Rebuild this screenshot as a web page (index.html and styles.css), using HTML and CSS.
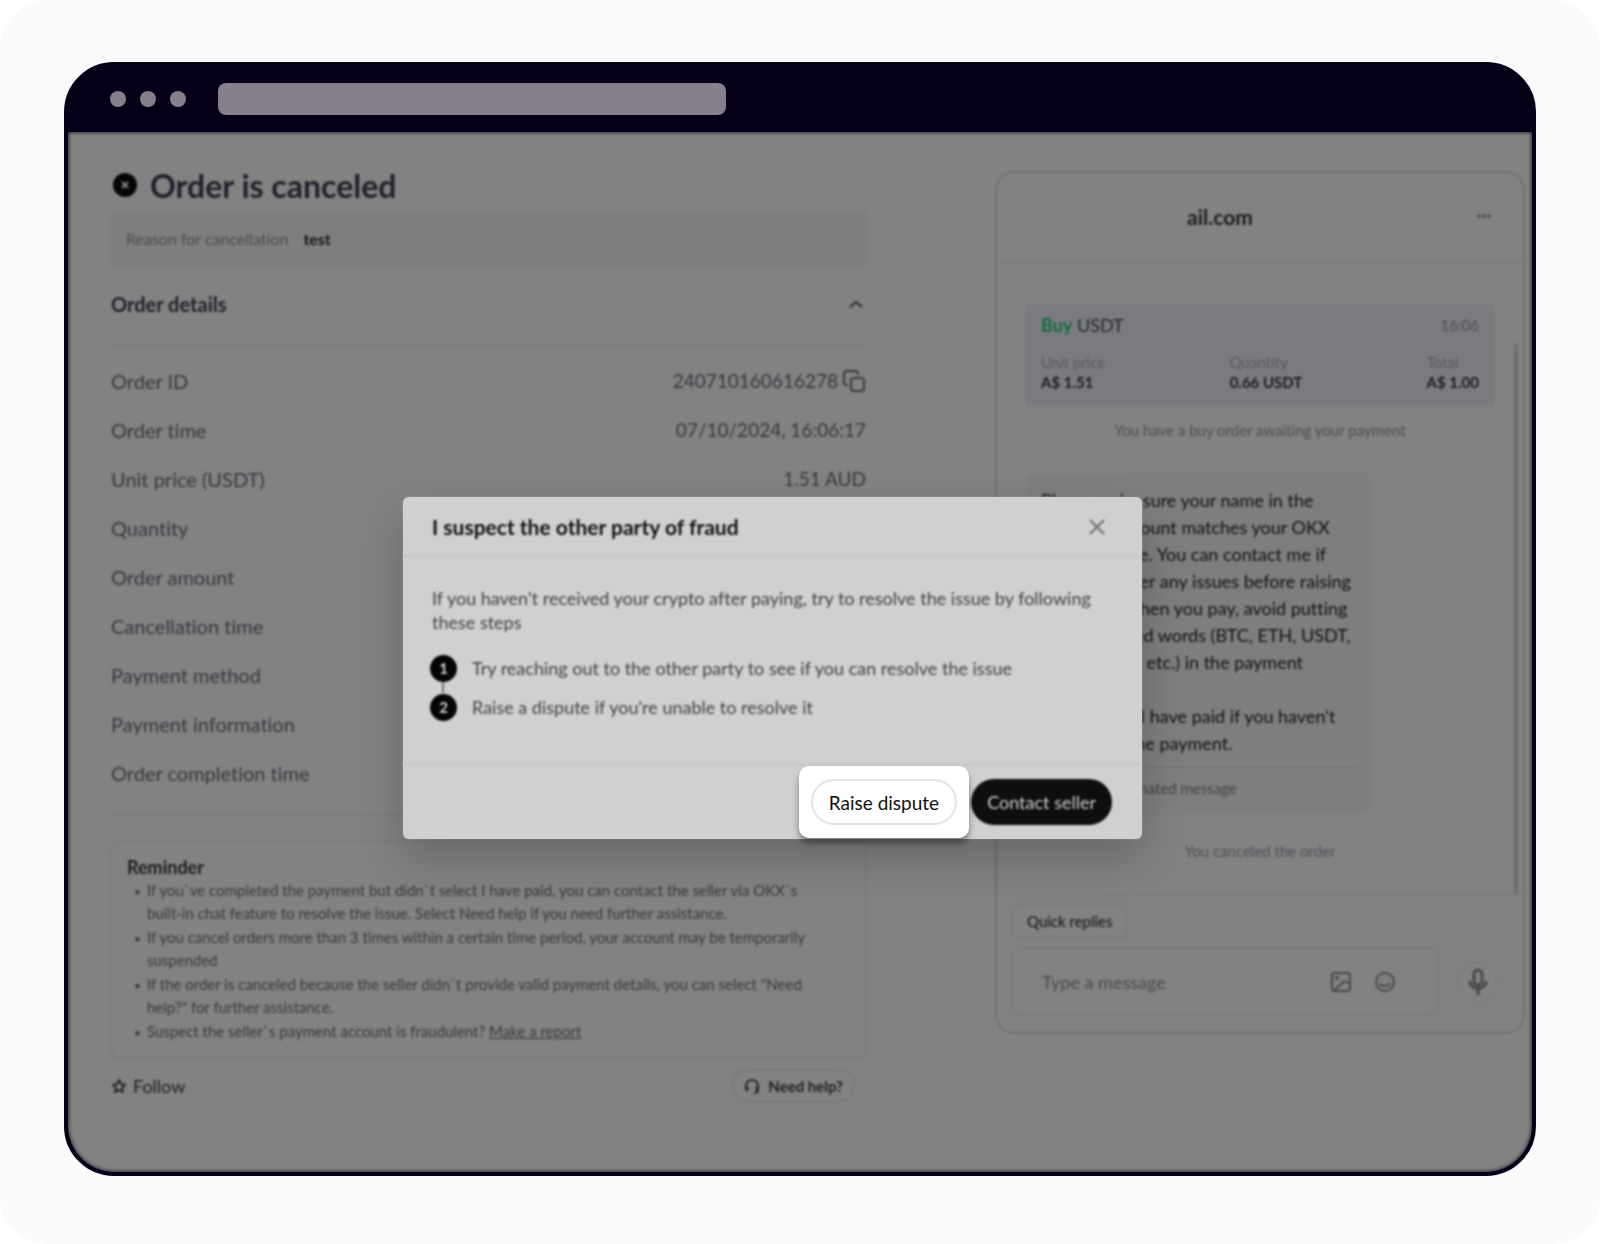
FILE: index.html
```html
<!DOCTYPE html>
<html lang="en">
<head>
    <meta charset="UTF-8">
    <meta name="viewport" content="width=device-width, initial-scale=1.0">
    <title>Order is canceled</title>
    <link rel="stylesheet" href="styles.css">
</head>
<body>
    <div class="canvas">
        <div class="window">
            <div class="titlebar">
                <span class="dot"></span>
                <span class="dot"></span>
                <span class="dot"></span>
                <span class="address"></span>
            </div>

            <div class="screen">
                <div class="page">
                    <main class="order">
                        <h1>
                            <svg class="cancel-icon" viewBox="0 0 24 24" width="24" height="24">
                                <circle cx="12" cy="12" r="12" fill="#060606"/>
                                <path d="M9 9l6 6M15 9l-6 6" stroke="#8a8a8a" stroke-width="2"/>
                            </svg>
                            Order is canceled
                        </h1>
                        <p class="reason"><span>Reason for cancellation</span><b>test</b></p>

                        <div class="details-head">
                            <h2>Order details</h2>
                            <button type="button" class="icon-btn" aria-label="Collapse">
                                <svg viewBox="0 0 16 16" width="16" height="16" fill="none" stroke="#2c2c2e" stroke-width="2">
                                    <path d="M2 11l6-5 6 5"/>
                                </svg>
                            </button>
                        </div>

                        <dl class="details">
                            <div>
                                <dt>Order ID</dt>
                                <dd>240710160616278<button type="button" class="icon-btn" aria-label="Copy">
                                    <svg viewBox="0 0 24 24" width="24" height="24" fill="none" stroke="#3a3b3f" stroke-width="2">
                                        <path d="M6 16H5a3 3 0 0 1-3-3V5a3 3 0 0 1 3-3h8a3 3 0 0 1 3 3v1"/>
                                        <rect x="9" y="9" width="13" height="13" rx="3"/>
                                    </svg>
                                </button></dd>
                            </div>
                            <div><dt>Order time</dt><dd>07/10/2024, 16:06:17</dd></div>
                            <div><dt>Unit price (USDT)</dt><dd>1.51 AUD</dd></div>
                            <div><dt>Quantity</dt></div>
                            <div><dt>Order amount</dt></div>
                            <div><dt>Cancellation time</dt></div>
                            <div><dt>Payment method</dt></div>
                            <div><dt>Payment information</dt></div>
                            <div><dt>Order completion time</dt></div>
                        </dl>

                        <section class="reminder">
                            <h3>Reminder</h3>
                            <ul>
                                <li>If you`ve completed the payment but didn`t select I have paid, you can contact the seller via OKX`s<br>built-in chat feature to resolve the issue. Select Need help if you need further assistance.</li>
                                <li>If you cancel orders more than 3 times within a certain time period, your account may be temporarily<br>suspended</li>
                                <li>If the order is canceled because the seller didn`t provide valid payment details, you can select "Need<br>help?" for further assistance.</li>
                                <li>Suspect the seller`s payment account is fraudulent? <a href="#">Make a report</a></li>
                            </ul>
                        </section>

                        <div class="order-foot">
                            <button type="button" class="follow">
                                <svg viewBox="0 0 16 16" width="16" height="16" fill="none" stroke="#2a2a2a" stroke-width="2" stroke-linejoin="round">
                                    <path d="M8 2l2 4 4 1-3 3 1 4-4-2-4 2 1-4-3-3 4-1z"/>
                                </svg>
                                Follow
                            </button>
                            <button type="button" class="help">
                                <svg viewBox="0 0 16 16" width="16" height="16" fill="none" stroke="#2a2a2a" stroke-width="2">
                                    <path d="M2 12V8a6 6 0 0 1 12 0v4c0 2-1 3-4 3"/>
                                    <path d="M3 9v4M13 9v4" stroke-width="3"/>
                                </svg>
                                Need help?
                            </button>
                        </div>
                    </main>

                    <aside class="chat">
                        <header class="chat-head">
                            <span class="peer">ail.com</span>
                            <button type="button" class="icon-btn" aria-label="More">
                                <svg viewBox="0 0 16 16" width="16" height="16" fill="#333">
                                    <circle cx="3" cy="8" r="1.500"/><circle cx="8" cy="8" r="1.500"/><circle cx="13" cy="8" r="1.500"/>
                                </svg>
                            </button>
                        </header>

                        <div class="messages">
                            <div class="ticket">
                                <div class="ticket-head">
                                    <span><b class="buy">Buy</b> USDT</span>
                                    <time>16:06</time>
                                </div>
                                <div class="ticket-body">
                                    <p><span>Unit price</span><b>A$ 1.51</b></p>
                                    <p><span>Quantity</span><b>0.66 USDT</b></p>
                                    <p><span>Total</span><b>A$ 1.00</b></p>
                                </div>
                            </div>
                            <p class="notice">You have a buy order awaiting your payment</p>
                            <div class="bubble">
                                <p>Please make sure your name in the<br>payment account matches your OKX<br>verified name. You can contact me if<br>you encounter any issues before raising<br>a dispute. When you pay, avoid putting<br>crypto-related words (BTC, ETH, USDT,<br>Bitcoin, coin, etc.) in the payment<br>reference.<br>Don't select I have paid if you haven't<br>completed the payment.</p>
                                <small>This is an automated message</small>
                            </div>
                            <p class="notice">You canceled the order</p>
                            <span class="scrollbar"></span>
                        </div>

                        <div class="composer">
                            <button type="button" class="quick">Quick replies</button>
                            <div class="compose-row">
                                <div class="field">
                                    <input type="text" placeholder="Type a message" aria-label="Type a message">
                                    <button type="button" class="icon-btn" aria-label="Send picture">
                                        <svg viewBox="0 0 24 24" width="24" height="24" fill="none" stroke="#484848" stroke-width="2">
                                            <rect x="3" y="3" width="18" height="18" rx="3"/>
                                            <circle cx="8" cy="8" r="1"/>
                                            <path d="M5 21l9-9c2-1 5 0 7 2"/>
                                        </svg>
                                    </button>
                                    <button type="button" class="icon-btn" aria-label="Emoji">
                                        <svg viewBox="0 0 24 24" width="24" height="24" fill="none" stroke="#484848" stroke-width="2">
                                            <circle cx="12" cy="12" r="9"/>
                                            <path d="M7 13c1 4 9 4 10 0"/>
                                            <path d="M9 8v2M15 8v2" stroke-width="1"/>
                                        </svg>
                                    </button>
                                </div>
                                <button type="button" class="mic" aria-label="Record">
                                    <svg viewBox="0 0 24 28" width="24" height="28" fill="none" stroke="#484848" stroke-width="3">
                                        <rect x="8" y="2" width="8" height="15" rx="4"/>
                                        <path d="M4 13c0 10 16 10 16 0M12 21v6"/>
                                    </svg>
                                </button>
                            </div>
                        </div>
                    </aside>
                </div>

                <div class="modal" role="dialog" aria-labelledby="modal-title">
                    <header class="modal-head">
                        <h2 id="modal-title">I suspect the other party of fraud</h2>
                        <button type="button" class="icon-btn" aria-label="Close">
                            <svg viewBox="0 0 16 16" width="16" height="16" stroke="#6e6e6e" stroke-width="2">
                                <path d="M1 1l14 14M15 1L1 15"/>
                            </svg>
                        </button>
                    </header>
                    <div class="modal-body">
                        <p>If you haven't received your crypto after paying, try to resolve the issue by following<br>these steps</p>
                        <ol>
                            <li><span class="num">1</span>Try reaching out to the other party to see if you can resolve the issue</li>
                            <li><span class="num">2</span>Raise a dispute if you're unable to resolve it</li>
                        </ol>
                    </div>
                    <footer class="modal-foot">
                        <div class="spotlight">
                            <button type="button" class="btn">Raise dispute</button>
                        </div>
                        <button type="button" class="btn btn-dark">Contact seller</button>
                    </footer>
                </div>
            </div>
        </div>
    </div>
</body>
</html>
```
FILE: styles.css
```css
* {
    box-sizing: border-box;
    margin: 0;
    padding: 0;
}

body {
    font-family: Lato, "Liberation Sans", sans-serif;
    font-variant-ligatures: none;
    background: #fff;
    color: #1c1c1e;
}

button {
    font: inherit;
    color: inherit;
    background: none;
    border: none;
    cursor: pointer;
}

svg {
    display: block;
}

.canvas {
    min-height: 100vh;
    padding: 62px 64px 68px;
    background: #fafafa;
    border-radius: 48px;
    display: flex;
}

.window {
    flex: 1;
    display: flex;
    flex-direction: column;
    border: 4px solid #050017;
    border-radius: 50px;
    background: #050017;
    overflow: hidden;
}

.titlebar {
    display: flex;
    align-items: center;
    gap: 14px;
    height: 66px;
    padding: 0 42px;
}

.dot {
    width: 16px;
    height: 16px;
    border-radius: 50%;
    background: #85808b;
}

.address {
    width: 508px;
    height: 32px;
    margin-left: 18px;
    border-radius: 8px;
    background: #85808b;
}

.screen {
    position: relative;
    flex: 1;
    background: #828282;
    border-radius: 0 0 46px 46px;
    box-shadow: inset 0 0 4px #050017;
}

/* everything behind the highlighted button is out of focus */
.page,
.modal-head,
.modal-body,
.btn-dark {
    filter: blur(1px);
}

.page {
    display: grid;
    grid-template-columns: 1fr 530px;
    gap: 129px;
    align-items: start;
    padding: 39px 7px 60px 43px;
}

h1 {
    display: flex;
    align-items: center;
    gap: 13px;
    height: 28px;
    font-size: 32px;
    color: #20222b;
}

.cancel-icon {
    margin-left: 2px;
}

.reason {
    display: flex;
    align-items: center;
    gap: 15px;
    height: 54px;
    margin-top: 13px;
    padding: 0 15px 1px;
    background: #7e7e7e;
    font-size: 16px;
    color: #4c4c4c;
}

.reason b {
    color: #141416;
}

.details-head {
    display: flex;
    align-items: center;
    justify-content: space-between;
    height: 80px;
    padding: 0 2px 3px 0;
    border-bottom: 1px solid #7a7a7a;
}

.details-head h2 {
    font-size: 20px;
    color: #20222b;
}

.details {
    padding: 10px 0 17px;
    border-bottom: 1px solid #7a7a7a;
    font-size: 20px;
    color: #36383f;
}

.details div {
    display: flex;
    align-items: center;
    justify-content: space-between;
    height: 49px;
}

.details dd {
    display: flex;
    align-items: center;
    gap: 4px;
    font-size: 19px;
}

.reminder {
    margin-top: 25px;
    padding: 15px 15px 14px;
    border: 1px solid #7a7a7a;
    border-radius: 8px;
    font-size: 15px;
    line-height: 23px;
    color: #393939;
}

.reminder h3 {
    font-size: 18px;
    color: #1c1c1e;
}

.reminder ul {
    padding-left: 20px;
}

.reminder li {
    margin-bottom: 1px;
    white-space: nowrap;
}

.reminder li::marker {
    content: "•\00a0\00a0";
    font-size: 12px;
}

.reminder a {
    color: inherit;
}

.order-foot {
    display: flex;
    align-items: center;
    justify-content: space-between;
    padding: 10px 11px 0 0;
}

.follow,
.help {
    display: flex;
    align-items: center;
    gap: 6px;
    font-size: 18px;
    color: #1e1e1e;
}

.help {
    height: 33px;
    padding: 0 11px;
    gap: 8px;
    border: 1px solid #747474;
    border-radius: 17px;
    font-size: 15px;
    font-weight: 700;
}

.chat {
    display: flex;
    flex-direction: column;
    border: 2px solid #727272;
    border-radius: 20px;
}

.chat-head {
    display: flex;
    align-items: center;
    justify-content: space-between;
    height: 90px;
    padding: 0 31px 3px 190px;
    border-bottom: 1px solid #7a7a7a;
}

.peer {
    font-size: 21px;
    font-weight: 700;
}

.messages {
    position: relative;
    height: 632px;
    padding: 41px 29px 0;
    border-bottom: 1px solid #7a7a7a;
}

.scrollbar {
    position: absolute;
    right: 5px;
    bottom: 0;
    width: 4px;
    height: 550px;
    background: #6e6e6e;
}

.ticket {
    height: 102px;
    padding: 0 15px;
    background: #797b81;
}

.ticket-head {
    display: flex;
    align-items: center;
    justify-content: space-between;
    height: 41px;
    font-size: 18px;
    color: #26272d;
}

.ticket-head time {
    font-size: 15px;
    color: #505157;
}

.buy {
    color: #176b3a;
}

.ticket-body {
    display: flex;
    justify-content: space-between;
    padding-top: 7px;
    font-size: 15px;
    line-height: 20px;
}

.ticket-body span {
    display: block;
    color: #5a5b61;
}

.notice {
    padding: 14px 0;
    font-size: 15px;
    line-height: 20px;
    text-align: center;
    color: #4e5057;
}

.bubble {
    width: 344px;
    margin: 19px 0 13px;
    padding: 14px 13px 0 15px;
    border-radius: 8px;
    background: #7e7e7e;
    font-size: 18px;
    line-height: 27px;
    color: #111;
    white-space: nowrap;
}

.bubble small {
    display: block;
    margin-top: 10px;
    padding: 10px 0 16px;
    border-top: 1px solid #707070;
    font-size: 15px;
    line-height: 20px;
    color: #444;
}

.composer {
    padding: 9px 15px 16px;
}

.quick {
    height: 34px;
    padding: 0 14px;
    border: 1px solid #7a7a7a;
    border-radius: 6px;
    font-size: 15px;
    color: #111;
}

.compose-row {
    display: flex;
    align-items: center;
    gap: 19px;
    margin-top: 10px;
}

.field {
    display: flex;
    align-items: center;
    gap: 20px;
    flex: 1;
    height: 68px;
    padding: 0 40px 0 29px;
    border: 1px solid #7a7a7a;
    border-radius: 8px;
}

.field input {
    flex: 1;
    min-width: 0;
    border: none;
    outline: none;
    background: none;
    font: inherit;
    font-size: 18px;
}

.field input::placeholder {
    color: #4c4c4c;
    opacity: 1;
}

.mic {
    display: flex;
    align-items: center;
    justify-content: center;
    width: 42px;
    height: 42px;
    margin-right: 9px;
    border: 1px solid #7d7d7d;
    border-radius: 50%;
}

.modal {
    position: absolute;
    top: 365px;
    left: 335px;
    width: 739px;
    border-radius: 6px;
    background: #d0d0d0;
    box-shadow: 0 20px 44px rgba(0, 0, 0, 0.2), 0 0 2px #b0b0b0;
}

.modal-head {
    display: flex;
    align-items: center;
    justify-content: space-between;
    height: 60px;
    padding: 0 37px 0 29px;
    border-bottom: 1px solid #bebebe;
}

.modal-head h2 {
    font-size: 21px;
    color: #111;
}

.modal-body {
    padding: 29px 29px 43px;
    border-bottom: 1px solid #bebebe;
    font-size: 18px;
    line-height: 24px;
    color: #424242;
}

.modal-body p {
    white-space: nowrap;
}

.modal-body ol {
    margin: 20px 0 0 -2px;
    list-style: none;
}

.modal-body li {
    position: relative;
    display: flex;
    align-items: center;
    gap: 15px;
    height: 28px;
}

.modal-body li + li {
    margin-top: 11px;
}

/* connector between the step numbers */
.modal-body li + li::before {
    content: "";
    position: absolute;
    left: 12px;
    bottom: 28px;
    width: 2px;
    height: 11px;
    background: #777;
}

.num {
    width: 27px;
    height: 27px;
    border-radius: 50%;
    background: #050505;
    color: #d0d0d0;
    font-size: 15px;
    font-weight: 700;
    line-height: 27px;
    text-align: center;
}

.modal-foot {
    display: flex;
    align-items: center;
    justify-content: flex-end;
    gap: 2px;
    padding: 1px 30px 1px 0;
}

.spotlight {
    padding: 13px 12px;
    border-radius: 10px;
    background: #fff;
    box-shadow: 0 5px 6px rgba(0, 0, 0, 0.4);
}

.btn {
    height: 46px;
    padding: 0 16px;
    border: 2px solid #e4e4e4;
    border-radius: 23px;
    font-size: 19px;
    color: #111;
}

.btn-dark {
    padding: 0 14px;
    border-color: #0e0e0e;
    background: #0e0e0e;
    font-size: 18px;
    color: #d0d0d0;
}
```
